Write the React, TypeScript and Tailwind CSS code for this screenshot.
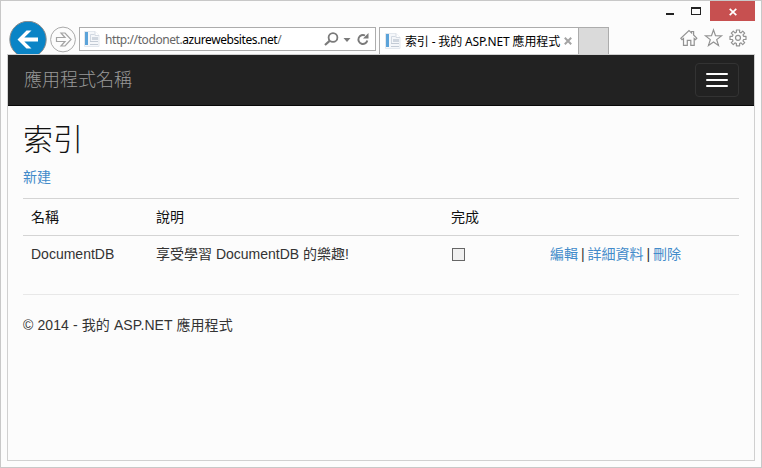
import type { ReactNode } from "react";

const UI_FONT = "font-['Noto_Sans','Noto_Sans_CJK_TC',sans-serif]";
const PAGE_FONT = "font-['Liberation_Sans','Noto_Sans_CJK_TC',sans-serif]";

function PageIcon() {
  return (
    <svg width="16" height="16" viewBox="0 0 16 16" className="shrink-0">
      <path d="M.5 .5h10.500l4 4V15.500H.5z" fill="#f5f7fa" stroke="#e3e8ee" />
      <path d="M11 .5v4h4" fill="#fff" stroke="#d5dbe3" />
      <rect x="1" y="1" width="3" height="13" fill="#5ba3d9" />
      <path d="M6.500 11V3.500h4" fill="none" stroke="#d2d9e2" />
      <rect x="8" y="6" width="6" height="3" fill="#cfd6df" />
      <path d="M6 10.500h8M6 13.500h8" stroke="#c3cbd5" />
    </svg>
  );
}

function WindowControls() {
  return (
    <div className="flex h-5 justify-end pr-[6px]">
      <div className="flex w-[22px] items-end justify-center pb-[6px]">
        <div className="mr-[3px] h-[2px] w-2 bg-[#222]" />
      </div>
      <div className="flex w-7 justify-center pt-[6px]">
        <div className="mr-[1px] h-2 w-[10px] border border-t-2 border-[#222]" />
      </div>
      <div className="flex h-5 w-[45px] items-center justify-center bg-[#c75050]">
        <svg width="8" height="8" viewBox="0 0 8 8" className="mt-[2px] mr-[-1px]">
          <path d="M.7.8l6.6 6.4M7.3.8L.7 7.2" stroke="#fff" strokeWidth="1.7" />
        </svg>
      </div>
    </div>
  );
}

function NavButtons() {
  return (
    <svg width="70" height="34" viewBox="0 0 70 34" className="shrink-0">
      <circle cx="19" cy="18.5" r="18.2" fill="#0a84c6" stroke="#8b8b8b" />
      <path d="M8.500 18.500L17.500 9.500h5L15.300 16.500H29v4H15.300l7.200 7h-5z" fill="#fff" />
      <circle cx="54" cy="18.5" r="12.4" fill="#fcfcfc" stroke="#a9a9a9" />
      <path
        d="M47.5 16.500h8.500l-4-4.500h4l6 6.500-6 6.500h-4l4-4.500h-8.500z"
        fill="none"
        stroke="#a4a4a4"
        strokeWidth="1.200"
      />
    </svg>
  );
}

function AddressBar() {
  return (
    <div className={`flex h-6 w-[297px] items-center border border-[#acacac] bg-white pl-1 ${UI_FONT}`}>
      <PageIcon />
      <div className="ml-[5px] w-[219px] pt-[1px] text-[12px] leading-[22px] tracking-[-0.42px] whitespace-nowrap text-[#666]">
        http://todonet.<span className="text-black">azurewebsites.net</span>/
      </div>
      <svg width="46" height="16" viewBox="0 0 46 16" fill="none" stroke="#7a7a7a" className="shrink-0">
        <circle cx="9" cy="6.5" r="4.400" strokeWidth="1.8" />
        <path d="M5.600 9.900L1 14" strokeWidth="2.200" />
        <path d="M19.500 7h7l-3.500 4z" fill="#7a7a7a" stroke="none" />
        <path d="M43.300 9.500a4.500 4.500 0 1 1-2.300-5" strokeWidth="1.900" />
        <path d="M44.500 2v5.500h-5.500z" fill="#7a7a7a" stroke="none" />
      </svg>
    </div>
  );
}

function Tabs() {
  return (
    <>
      <div className={`ml-[3px] flex h-[27px] w-[200px] items-center border border-b-0 border-[#acacac] bg-white pl-[5px] ${UI_FONT}`}>
        <PageIcon />
        <div className="ml-1 w-[156px] overflow-hidden pt-[1px] text-[12px] leading-5 tracking-[-0.15px] whitespace-nowrap text-black">
          索引 - 我的 ASP.NET 應用程式
        </div>
        <svg width="8" height="8" viewBox="0 0 8 8" className="ml-[3px] shrink-0">
          <path d="M.8.8l6.4 6.4M7.2.8L.8 7.2" stroke="#a4a4a4" strokeWidth="2" />
        </svg>
      </div>
      <div className="h-[27px] w-[30px] border border-b-0 border-l-0 border-[#acacac] bg-[#dadada]" />
    </>
  );
}

function ToolIcons() {
  return (
    <svg width="68" height="20" viewBox="0 0 68 20" fill="none" stroke="#929292" strokeWidth="1.200" className="ml-auto mr-[13px] shrink-0">
      <path d="M3.500 10.500L2 11.700.800 10.300 9 2.500l2.600 2.400V3.500h2v3.400l3.200 3.300-1.300 1.400-1.300-1.100v6.800h-3.400v-5H7.300v5H3.500z" />
      <path d="M33.500 1.900l2 5.800 6 .2-4.800 3.700 1.800 5.800-5-3.500-5 3.500 1.800-5.800-4.800-3.700 6-.2z" />
      <circle cx="58" cy="9.8" r="2.5" />
      <path d="M56.400 2h3.200v2.300l1.400.6 1.700-1.700 2 2-1.700 1.700.6 1.400h2.400v3.200h-2.400l-.6 1.400 1.700 1.700-2 2-1.700-1.700-1.400.6v2.300h-3.200v-2.300l-1.400-.6-1.700 1.700-2-2 1.700-1.700-.6-1.400h-2.400V8.300h2.400l.6-1.400-1.700-1.700 2-2 1.700 1.700 1.400-.6z" strokeLinejoin="round" />
    </svg>
  );
}

function BrowserChrome() {
  return (
    <header className="h-[53px]">
      <WindowControls />
      <div className="flex h-[33px] pl-2">
        <div className="h-[33px] overflow-hidden">
          <NavButtons />
        </div>
        <div className="flex grow pt-[6px]">
          <AddressBar />
          <Tabs />
          <div className="ml-auto pt-[1px]">
            <ToolIcons />
          </div>
        </div>
      </div>
    </header>
  );
}

function Link({ children }: { children: ReactNode }) {
  return (
    <a href="#" className="text-[#428bca]">
      {children}
    </a>
  );
}

export default function App() {
  return (
    <div className="flex h-[468px] w-[762px] flex-col overflow-hidden border border-[#c8c8c8] bg-[#fcfcfc]">
      <BrowserChrome />
      <main className={`mx-[6px] h-[407px] border border-[#d0d0d0] text-[14px] leading-5 text-[#333] ${PAGE_FONT}`}>
        <nav className="flex h-[51px] items-center justify-between border-b border-[#080808] bg-[#222] pr-[15px] pl-4">
          <span className="pb-[1px] text-[18px] font-light text-[#999]">應用程式名稱</span>
          <button className="flex h-[34px] w-11 flex-col items-center justify-center gap-1 rounded border border-[#333]">
            <span className="h-[2px] w-[22px] rounded-[1px] bg-white" />
            <span className="h-[2px] w-[22px] rounded-[1px] bg-white" />
            <span className="h-[2px] w-[22px] rounded-[1px] bg-white" />
          </button>
        </nav>
        <div className="px-[15px]">
          <h2 className="pt-[17px] text-[30px] leading-[33px] font-light text-[#111]">索引</h2>
          <p className="mt-[11px]">
            <Link>新建</Link>
          </p>
          <table className="mt-[11px] w-[716px] table-fixed border-collapse text-left">
            <colgroup>
              <col className="w-[125px]" />
              <col className="w-[295px]" />
              <col className="w-[99px]" />
              <col />
            </colgroup>
            <tbody>
              <tr className="h-[37px] border-t border-[#d4d4d4]">
                <th className="px-2 font-normal text-[#111]">名稱</th>
                <th className="px-2 font-normal text-[#111]">說明</th>
                <th className="px-2 font-normal text-[#111]">完成</th>
                <th />
              </tr>
              <tr className="h-[37px] border-t border-[#d4d4d4]">
                <td className="px-2">DocumentDB</td>
                <td className="px-2">享受學習 DocumentDB 的樂趣!</td>
                <td className="px-2">
                  <div className="mt-[1px] ml-[1px] size-[13px] border border-[#666] bg-[#f0f0f0]" />
                </td>
                <td className="px-2 [word-spacing:-0.95px]">
                  <Link>編輯</Link> | <Link>詳細資料</Link> | <Link>刪除</Link>
                </td>
              </tr>
            </tbody>
          </table>
          <hr className="mt-[21px] border-[#e8e8e8]" />
          <footer className="mt-5 tracking-[0.1px]">© 2014 - 我的 ASP.NET 應用程式</footer>
        </div>
      </main>
    </div>
  );
}
